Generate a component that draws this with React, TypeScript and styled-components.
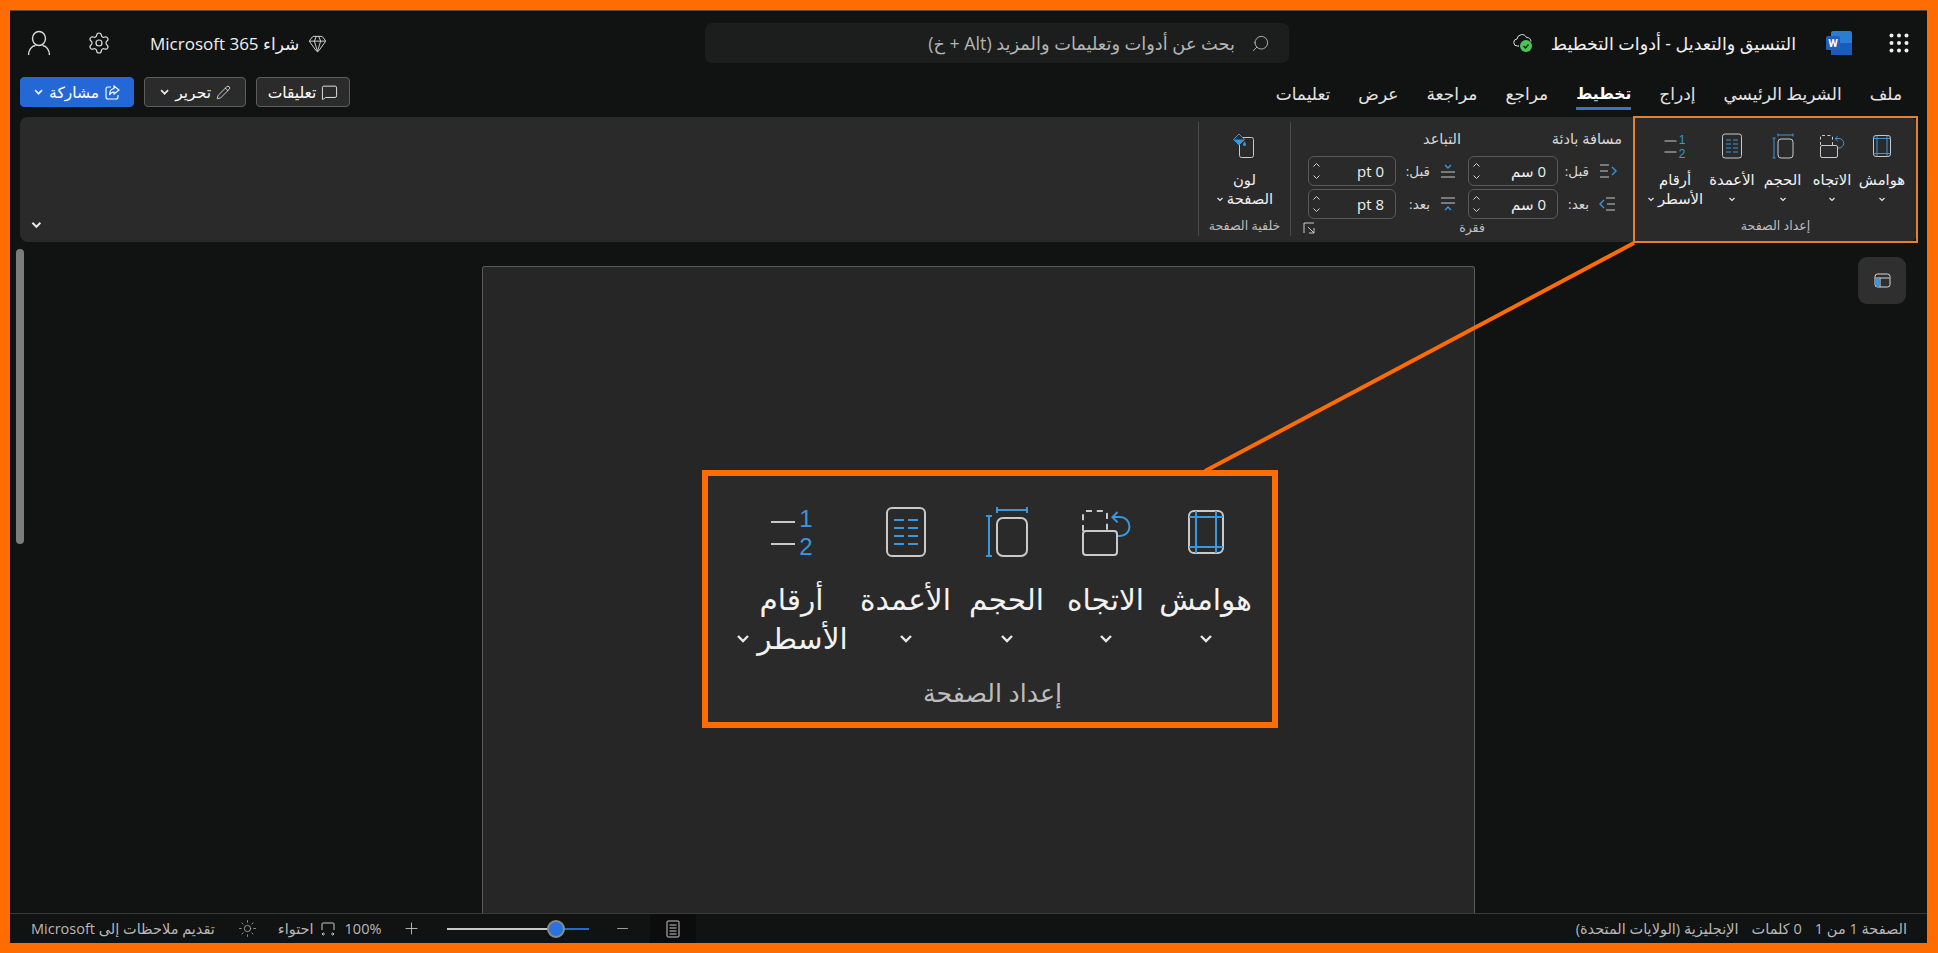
import React from 'react';
import styled, { createGlobalStyle } from 'styled-components';
import { Gem, MessageSquare, Minus, Pencil, Plus, Search, Settings, Sun } from 'lucide-react';

const GREY = '#c9c9c9';
const BLUE = '#3a96dd';
const FONT = '"Open Sans", "DejaVu Sans", sans-serif';

const GlobalStyle = createGlobalStyle`
  html, body {
    margin: 0;
    padding: 0;
    background: #ff6c00;
  }
  * {
    box-sizing: border-box;
  }
`;

const Frame = styled.div`
  width: 1938px;
  height: 953px;
  padding: 10px 11px 10px 10px;
  background: #ff6c00;
  overflow: hidden;
  font-family: ${FONT};
`;

const Screen = styled.div`
  position: relative;
  width: 100%;
  height: 100%;
  display: flex;
  flex-direction: column;
  background: #111212;
  border-top: 1px solid #5c4a3a;
  color: #f0f0f0;
  overflow: hidden;
`;

const TitleBar = styled.header`
  height: 64px;
  display: flex;
  align-items: center;
  flex: none;
`;

const TitleCluster = styled.div`
  width: 638px;
  flex: none;
  display: flex;
  align-items: center;
  padding-right: 18px;
`;

const WordMark = styled.svg`
  margin-right: 37px;
  flex: none;
`;

const DocTitle = styled.div`
  margin-right: 30px;
  font-size: 17.5px;
  white-space: nowrap;
`;

const CloudMark = styled.svg`
  margin-right: 16px;
  flex: none;
`;

const SearchBox = styled.div`
  width: 584px;
  height: 40px;
  flex: none;
  display: flex;
  align-items: center;
  gap: 16px;
  padding-right: 19px;
  background: #1c1d1d;
  border-radius: 7px;
  color: #b4b4b4;
  font-size: 17.8px;
  white-space: nowrap;
`;

const Mirrored = styled.span`
  display: flex;
  transform: scaleX(-1);
  color: #b4b4b4;
`;

const AccountCluster = styled.div`
  flex: 1;
  display: flex;
  align-items: center;
  justify-content: flex-end;
  padding-left: 15px;
`;

const Upsell = styled.div`
  display: flex;
  align-items: center;
  gap: 9px;
  font-size: 17px;
  white-space: nowrap;
`;

const GearSlot = styled.span`
  display: flex;
  margin: 0 39px 0 34px;
  color: #dcdcdc;
`;

const TabRow = styled.div`
  height: 42px;
  flex: none;
  display: flex;
  align-items: flex-start;
  justify-content: space-between;
  padding: 2px 25px 0 10px;
`;

const Tabs = styled.nav`
  display: flex;
  gap: 28px;
`;

const Tab = styled.div<{ $active?: boolean }>`
  height: 33px;
  padding-top: 4px;
  line-height: 25px;
  font-size: ${(p) => (p.$active ? 15.5 : 17)}px;
  font-weight: ${(p) => (p.$active ? 700 : 400)};
  color: ${(p) => (p.$active ? '#fff' : '#e4e4e4')};
  border-bottom: 3px solid ${(p) => (p.$active ? '#3f6fc4' : 'transparent')};
  white-space: nowrap;
`;

const Actions = styled.div`
  display: flex;
  gap: 10px;
`;

const ActionButton = styled.button<{ $primary?: boolean; $w: number }>`
  width: ${(p) => p.$w}px;
  height: 30px;
  display: flex;
  align-items: center;
  justify-content: center;
  gap: 5px;
  padding: 0;
  border-radius: 4px;
  border: 1px solid ${(p) => (p.$primary ? '#2468d6' : '#5e5e5e')};
  background: ${(p) => (p.$primary ? '#2468d6' : '#2b2b2b')};
  color: #fff;
  font-family: ${FONT};
  font-size: 15.5px;
  white-space: nowrap;
`;

const Ribbon = styled.section`
  height: 125px;
  flex: none;
  margin: 0 10px;
  display: flex;
  background: #2a2a2a;
  border-radius: 8px;
`;

const ToolGroup = styled.div<{ $k: number; $outlined?: boolean; $w: number }>`
  width: ${(p) => p.$w}px;
  flex: none;
  display: flex;
  flex-direction: column;
  align-items: center;
  padding-top: ${(p) => p.$k * 13 + 2}px;
  ${(p) => p.$outlined && 'outline: 2px solid #e5802f; outline-offset: -1px;'}
`;

const ToolRow = styled.div`
  display: flex;
`;

const ToolItem = styled.div<{ $k: number; $w: number }>`
  width: ${(p) => p.$k * p.$w}px;
  display: flex;
  flex-direction: column;
  align-items: center;
  color: #f2f2f2;
`;

const ToolIcon = styled.svg<{ $k: number }>`
  width: ${(p) => p.$k * 28}px;
  height: ${(p) => p.$k * 28}px;
  margin-bottom: ${(p) => p.$k * 9.5}px;
`;

const ToolLine = styled.div<{ $k: number }>`
  height: ${(p) => p.$k * 19.5}px;
  line-height: ${(p) => p.$k * 19.5}px;
  font-size: ${(p) => p.$k * 14.8}px;
  display: flex;
  align-items: center;
  gap: ${(p) => p.$k * 3}px;
  white-space: nowrap;
`;

const GroupLabel = styled.div<{ $k: number }>`
  margin-top: ${(p) => p.$k * 7.5}px;
  height: ${(p) => p.$k * 20}px;
  line-height: ${(p) => p.$k * 20}px;
  font-size: ${(p) => p.$k * 12.6}px;
  color: #bdbdbd;
  white-space: nowrap;
`;

const Chevron = styled.svg<{ $k: number }>`
  width: ${(p) => p.$k * 8}px;
  height: ${(p) => p.$k * 8}px;
  flex: none;
`;

const RibbonDivider = styled.div`
  width: 1px;
  margin: 5px 0 6px;
  flex: none;
  background: #4a4a4a;
`;

const Paragraph = styled.div`
  width: 343px;
  flex: none;
  display: flex;
  flex-direction: column;
  padding-top: 10px;
`;

const ParagraphHead = styled.div`
  height: 24px;
  margin-bottom: 6px;
  display: grid;
  grid-template-columns: 161px auto;
  justify-content: start;
  align-items: center;
  padding-right: 12px;
  font-size: 14.5px;
  color: #d8d8d8;
  white-space: nowrap;
`;

const ParagraphRows = styled.div`
  display: flex;
  flex-direction: column;
  gap: 3px;
  padding-right: 17px;
`;

const ParagraphRow = styled.div`
  display: flex;
  gap: 11px;
`;

const Field = styled.div<{ $labelW: number; $boxW: number; $gap: number }>`
  display: grid;
  grid-template-columns: 18px ${(p) => p.$labelW}px ${(p) => p.$boxW}px;
  column-gap: 0;
  align-items: center;
  font-size: 13.5px;
  color: #d8d8d8;
  & > svg {
    justify-self: center;
  }
  & > span {
    padding-right: ${(p) => p.$gap}px;
    white-space: nowrap;
  }
`;

const SpinBox = styled.div`
  height: 30px;
  display: flex;
  align-items: center;
  justify-content: space-between;
  padding: 0 11px 0 3px;
  border: 1px solid #5a5a5a;
  border-radius: 6px;
  font-size: 15px;
  color: #f0f0f0;
  white-space: nowrap;
`;

const Spinner = styled.div`
  display: flex;
  flex-direction: column;
  gap: 6px;
  color: #d0d0d0;
`;

const ParagraphFoot = styled.div`
  position: relative;
  flex: 1;
  display: flex;
  align-items: center;
  justify-content: center;
  padding: 0 0 6px 19px;
  font-size: 12.5px;
  color: #bdbdbd;
`;

const Launcher = styled.svg`
  position: absolute;
  left: 12px;
  top: 3px;
`;

const ExpandSlot = styled.div`
  margin-right: auto;
  align-self: flex-end;
  display: flex;
  padding: 0 0 11px 10px;
`;

const Workspace = styled.main`
  position: relative;
  flex: 1;
  min-height: 0;
  display: flex;
  justify-content: flex-start;
  padding: 24px 452px 0 0;
`;

const Sheet = styled.div`
  width: 993px;
  height: 100%;
  background: #262626;
  border: 1px solid #5a5a5a;
  border-bottom: none;
  border-radius: 3px 3px 0 0;
`;

const ScrollThumb = styled.div`
  position: absolute;
  left: 6px;
  top: 7px;
  width: 8px;
  height: 295px;
  background: #7c7c7c;
  border-radius: 4px;
`;

const PanelButton = styled.div`
  position: absolute;
  right: 21px;
  top: 15px;
  width: 48px;
  height: 47px;
  display: flex;
  align-items: center;
  justify-content: center;
  background: #2f2f2f;
  border-radius: 9px;
`;

const StatusBar = styled.footer`
  height: 30px;
  flex: none;
  display: flex;
  align-items: center;
  justify-content: space-between;
  padding: 0 20px 0 21px;
  border-top: 1px solid #3a3a3a;
  font-size: 14.5px;
  color: #b8b8b8;
  white-space: nowrap;
`;

const StatusInfo = styled.div`
  display: flex;
  gap: 13px;
`;

const StatusTools = styled.div`
  height: 100%;
  display: flex;
  align-items: center;
`;

const StatusCell = styled.span<{ $m: number }>`
  display: flex;
  align-items: center;
  margin-right: ${(p) => p.$m}px;
`;

const PageCell = styled.div`
  width: 46px;
  height: 100%;
  display: flex;
  align-items: center;
  justify-content: center;
  background: #0c0c0c;
`;

const Slider = styled.div`
  position: relative;
  width: 142px;
  height: 16px;
  margin-right: 25px;
  display: flex;
  align-items: center;
`;

const SliderFill = styled.div`
  flex: 1;
  height: 2px;
  background: #c8c8c8;
`;

const SliderRest = styled.div`
  width: 33px;
  height: 2px;
  background: #2468d6;
`;

const SliderThumb = styled.div`
  position: absolute;
  right: 24px;
  top: -1px;
  width: 18px;
  height: 18px;
  border-radius: 50%;
  background: #2a72de;
  border: 2px solid #8a8a8a;
`;

const LeaderLine = styled.svg`
  position: absolute;
  left: 0;
  top: 0;
  pointer-events: none;
`;

const Callout = styled.div`
  position: absolute;
  left: 692px;
  top: 228px;
  width: 576px;
  height: 258px;
  display: flex;
  justify-content: center;
  padding-left: 5px;
  background: #2a2a2a;
  border: 6px solid #ff6c00;
`;

type Glyph = 'margins' | 'orientation' | 'size' | 'columns' | 'numbers' | 'pageColor';

const GlyphArt = ({ name }: { name: Glyph }) => {
  switch (name) {
    case 'margins':
      return (
        <>
          <rect x="5.5" y="3.5" width="17" height="21" rx="2.5" fill="none" stroke={GREY} />
          <path d="M9 3.5v21M19 3.5v21M5.5 6.500h17M5.5 21.5h17" fill="none" stroke={BLUE} />
        </>
      );
    case 'orientation':
      return (
        <>
          <rect x="2.5" y="3.5" width="12" height="11" rx="1.5" fill="none" stroke={GREY} strokeDasharray="3 2.4" />
          <rect x="2.5" y="13.5" width="17" height="12" rx="1.5" fill="#2a2a2a" stroke={GREY} />
          <path d="M17.5 6.500h3.500a3.500 3.500 0 0 1 0 9.500h-1M19.8 4l-2.600 2.600 2.600 2.600" fill="none" stroke={BLUE} />
        </>
      );
    case 'size':
      return (
        <>
          <path d="M9 3h15M9 1.500v3M24 1.500v3M5 6v20M3.500 6h3M3.500 26h3" fill="none" stroke={BLUE} />
          <rect x="9" y="7" width="15" height="19" rx="3" fill="none" stroke={GREY} />
        </>
      );
    case 'columns':
      return (
        <>
          <rect x="4.5" y="2" width="19" height="24" rx="2.5" fill="none" stroke={GREY} />
          <path d="M8 8h5M15 8h5M8 12h5M15 12h5M8 16h5M15 16h5M8 20h5M15 20h5" fill="none" stroke={BLUE} />
        </>
      );
    case 'numbers':
      return (
        <>
          <path d="M3.500 9h12M3.500 20h12" fill="none" stroke={GREY} />
          <text x="21" y="11.5" textAnchor="middle" fontSize="12" fill={BLUE} fontFamily="Liberation Sans, sans-serif">1</text>
          <text x="21" y="25.5" textAnchor="middle" fontSize="12" fill={BLUE} fontFamily="Liberation Sans, sans-serif">2</text>
        </>
      );
    case 'pageColor':
      return (
        <>
          <rect x="8.5" y="5.5" width="14" height="20" rx="2" fill="none" stroke={GREY} />
          <path d="M8 2l5.5 5.5L8 13 2.5 7.5z" fill="#2a2a2a" stroke={BLUE} />
          <path d="M3 7.500h10L8 13z" fill={BLUE} />
          <path d="M13.5 9.500c1 1.400 1.500 2.200 1.500 3a1.500 1.500 0 0 1-3 0c0-.8.5-1.600 1.500-3z" fill={BLUE} />
        </>
      );
  }
};

const SmallChevron = ({ k }: { k: number }) => (
  <Chevron $k={k} viewBox="0 0 8 8" fill="none" stroke="#e8e8e8" strokeWidth="1.2">
    <path d="M1.500 3l2.500 2.500L6.500 3" />
  </Chevron>
);

type ToolDef = { glyph: Glyph; lines: string[]; w: number };

const TOOLS: ToolDef[] = [
  { glyph: 'margins', lines: ['هوامش'], w: 50 },
  { glyph: 'orientation', lines: ['الاتجاه'], w: 50 },
  { glyph: 'size', lines: ['الحجم'], w: 49 },
  { glyph: 'columns', lines: ['الأعمدة'], w: 52 },
  { glyph: 'numbers', lines: ['أرقام', 'الأسطر'], w: 62 },
];

const Tool = ({ def, k }: { def: ToolDef; k: number }) => (
  <ToolItem $k={k} $w={def.w}>
    <ToolIcon $k={k} viewBox="0 0 28 28">
      <GlyphArt name={def.glyph} />
    </ToolIcon>
    <ToolLine $k={k}>{def.lines[0]}</ToolLine>
    <ToolLine $k={k}>
      {def.lines[1]}
      <SmallChevron k={k} />
    </ToolLine>
  </ToolItem>
);

const PageSetup = ({ k, outlined, w }: { k: number; outlined?: boolean; w: number }) => (
  <ToolGroup $k={k} $outlined={outlined} $w={w}>
    <ToolRow>
      {TOOLS.map((t) => (
        <Tool key={t.glyph} def={t} k={k} />
      ))}
    </ToolRow>
    <GroupLabel $k={k}>إعداد الصفحة</GroupLabel>
  </ToolGroup>
);

const Spin = ({ value }: { value: string }) => (
  <SpinBox>
    {value}
    <Spinner>
      <svg width="9" height="6" viewBox="0 0 9 6" fill="none" stroke="currentColor">
        <path d="M1.500 4.500l3-3 3 3" />
      </svg>
      <svg width="9" height="6" viewBox="0 0 9 6" fill="none" stroke="currentColor">
        <path d="M1.500 1.500l3 3 3-3" />
      </svg>
    </Spinner>
  </SpinBox>
);

const IndentIcon = ({ after }: { after?: boolean }) => (
  <svg width="18" height="18" viewBox="0 0 18 18" fill="none">
    <path d={after ? 'M7 3h9M8 9h8M7 15h9' : 'M1 3h9M1 9h8M1 15h9'} stroke={GREY} />
    <path d={after ? 'M5 5L1 9l4 4' : 'M13 5l4 4-4 4'} stroke={BLUE} strokeWidth="1.4" />
  </svg>
);

const SpacingIcon = ({ after }: { after?: boolean }) => (
  <svg width="18" height="18" viewBox="0 0 18 18" fill="none">
    <path d={after ? 'M2 3h14M2 8h14' : 'M2 10h14M2 15h14'} stroke={GREY} />
    <path d={after ? 'M6 15l3-3 3 3' : 'M6 3l3 3 3-3'} stroke={BLUE} strokeWidth="1.4" />
  </svg>
);

export default function App() {
  return (
    <Frame dir="rtl">
      <GlobalStyle />
      <Screen>
        <TitleBar>
          <TitleCluster>
            <svg width="20" height="20" viewBox="0 0 20 20" fill="#f0f0f0">
              {[2.5, 10, 17.5].map((y) =>
                [2.5, 10, 17.5].map((x) => <circle key={`${x}-${y}`} cx={x} cy={y} r="2" />),
              )}
            </svg>
            <WordMark width="26" height="24" viewBox="0 0 26 24">
              <rect x="5" y="0" width="21" height="24" rx="2" fill="#2b7cd3" />
              <rect x="5" y="12" width="21" height="12" fill="#185abd" />
              <rect x="0" y="5" width="14" height="14" rx="1.500" fill="#1f5fc0" />
              <text x="7" y="16" textAnchor="middle" fontSize="11" fontWeight="700" fill="#fff" fontFamily="Roboto, sans-serif">
                W
              </text>
            </WordMark>
            <DocTitle>التنسيق والتعديل - أدوات التخطيط</DocTitle>
            <CloudMark width="22" height="24" viewBox="0 0 22 24" fill="none">
              <path d="M6 15H4.500a3.500 3.500 0 0 1-.5-7 5 5 0 0 1 9.500-1.500 4 4 0 0 1 4.500 4" stroke="#e0e0e0" />
              <circle cx="13" cy="15" r="6" fill="#4cc35a" />
              <path d="M10.500 15l2 2 3-3.500" stroke="#0d2b12" strokeWidth="1.400" />
            </CloudMark>
          </TitleCluster>
          <SearchBox>
            <Mirrored>
              <Search size={19} strokeWidth={1.2} />
            </Mirrored>
            بحث عن أدوات وتعليمات والمزيد (Alt + خ)
          </SearchBox>
          <AccountCluster>
            <Upsell>
              <Gem size={19} strokeWidth={1.2} color="#d8d8d8" />
              شراء Microsoft 365
            </Upsell>
            <GearSlot>
              <Settings size={24} strokeWidth={1.2} />
            </GearSlot>
            <svg width="28" height="28" viewBox="0 0 28 28" fill="none" stroke="#dcdcdc" strokeWidth="1.4">
              <ellipse cx="14" cy="9.500" rx="6.500" ry="7" />
              <path d="M3.500 26c0-5 3-9 7-9.500M24.500 26c0-5-3-9-7-9.500" />
            </svg>
          </AccountCluster>
        </TitleBar>

        <TabRow>
          <Tabs>
            <Tab>ملف</Tab>
            <Tab>الشريط الرئيسي</Tab>
            <Tab>إدراج</Tab>
            <Tab $active>تخطيط</Tab>
            <Tab>مراجع</Tab>
            <Tab>مراجعة</Tab>
            <Tab>عرض</Tab>
            <Tab>تعليمات</Tab>
          </Tabs>
          <Actions>
            <ActionButton $w={94}>
              <MessageSquare size={17} strokeWidth={1.2} />
              تعليقات
            </ActionButton>
            <ActionButton $w={102}>
              <Pencil size={15} strokeWidth={1.2} />
              تحرير
              <SmallChevron k={1.4} />
            </ActionButton>
            <ActionButton $primary $w={114}>
              <svg width="17" height="17" viewBox="0 0 17 17" fill="none" stroke="#fff" strokeWidth="1.1">
                <path d="M7 3H4a2 2 0 0 0-2 2v8a2 2 0 0 0 2 2h8a2 2 0 0 0 2-2v-2" />
                <path d="M10 2l5 4-5 4V8C8 8 6.500 9 5.500 11c0-4 1.500-6 4.500-6.500z" />
              </svg>
              مشاركة
              <SmallChevron k={1.4} />
            </ActionButton>
          </Actions>
        </TabRow>

        <Ribbon>
          <PageSetup k={1} outlined w={283} />
          <Paragraph>
            <ParagraphHead>
              <span>مسافة بادئة</span>
              <span>التباعد</span>
            </ParagraphHead>
            <ParagraphRows>
              <ParagraphRow>
                <Field $labelW={41} $boxW={90} $gap={10}>
                  <IndentIcon />
                  <span>قبل:</span>
                  <Spin value="0 سم" />
                </Field>
                <Field $labelW={43} $boxW={88} $gap={9}>
                  <SpacingIcon />
                  <span>قبل:</span>
                  <Spin value="0 pt" />
                </Field>
              </ParagraphRow>
              <ParagraphRow>
                <Field $labelW={41} $boxW={90} $gap={10}>
                  <IndentIcon after />
                  <span>بعد:</span>
                  <Spin value="0 سم" />
                </Field>
                <Field $labelW={43} $boxW={88} $gap={9}>
                  <SpacingIcon after />
                  <span>بعد:</span>
                  <Spin value="8 pt" />
                </Field>
              </ParagraphRow>
            </ParagraphRows>
            <ParagraphFoot>
              فقرة
              <Launcher width="12" height="12" viewBox="0 0 12 12" fill="none" stroke={GREY}>
                <path d="M1 11V1h10M5 5l6 6M11 6v5H6" />
              </Launcher>
            </ParagraphFoot>
          </Paragraph>
          <RibbonDivider />
          <ToolGroup $k={1} $w={91}>
            <ToolIcon $k={1} viewBox="0 0 28 28">
              <GlyphArt name="pageColor" />
            </ToolIcon>
            <ToolLine $k={1}>لون</ToolLine>
            <ToolLine $k={1}>
              الصفحة
              <SmallChevron k={1} />
            </ToolLine>
            <GroupLabel $k={1}>خلفية الصفحة</GroupLabel>
          </ToolGroup>
          <RibbonDivider />
          <ExpandSlot>
            <SmallChevron k={1.6} />
          </ExpandSlot>
        </Ribbon>

        <Workspace>
          <Sheet />
          <ScrollThumb />
          <PanelButton>
            <svg width="19" height="19" viewBox="0 0 19 19" fill="none">
              <rect x="2" y="3" width="15" height="13" rx="2.500" stroke="#d8d8d8" />
              <path d="M2.500 7h14M7 7v9" stroke="#d8d8d8" />
              <rect x="3" y="7.500" width="3.500" height="8" fill={BLUE} />
            </svg>
          </PanelButton>
          <Callout>
            <PageSetup k={2} w={558} />
          </Callout>
        </Workspace>

        <StatusBar>
          <StatusInfo>
            <span>الصفحة 1 من 1</span>
            <span>0 كلمات</span>
            <span>الإنجليزية (الولايات المتحدة)</span>
          </StatusInfo>
          <StatusTools>
            <PageCell>
              <svg width="14" height="18" viewBox="0 0 14 18" fill="none" stroke="#c8c8c8">
                <rect x="1" y="1" width="12" height="16" rx="1" />
                <path d="M3.500 5h7M3.500 8h7M3.500 11h7M3.500 14h7" />
              </svg>
            </PageCell>
            <StatusCell $m={19}>
              <Minus size={17} strokeWidth={1.2} />
            </StatusCell>
            <Slider dir="ltr">
              <SliderFill />
              <SliderRest />
              <SliderThumb />
            </Slider>
            <StatusCell $m={26}>
              <Plus size={19} strokeWidth={1.2} />
            </StatusCell>
            <StatusCell $m={21}>100%</StatusCell>
            <StatusCell $m={9}>
              <svg width="16" height="16" viewBox="0 0 16 16" fill="none" stroke="#c8c8c8">
                <path d="M2 9V3a1 1 0 0 1 1-1h10a1 1 0 0 1 1 1v6M2 13h3M3.500 11.500L2 13l1.500 1.500M14 13h-3M12.500 11.500L14 13l-1.500 1.500" />
              </svg>
            </StatusCell>
            <StatusCell $m={6}>احتواء</StatusCell>
            <StatusCell $m={21}>
              <Sun size={19} strokeWidth={1} />
            </StatusCell>
            <StatusCell $m={23}>تقديم ملاحظات إلى Microsoft</StatusCell>
          </StatusTools>
        </StatusBar>

        <LeaderLine width="1917" height="933">
          <line x1="1624" y1="232" x2="1195" y2="460" stroke="#ff6c00" strokeWidth="4" />
        </LeaderLine>
      </Screen>
    </Frame>
  );
}
